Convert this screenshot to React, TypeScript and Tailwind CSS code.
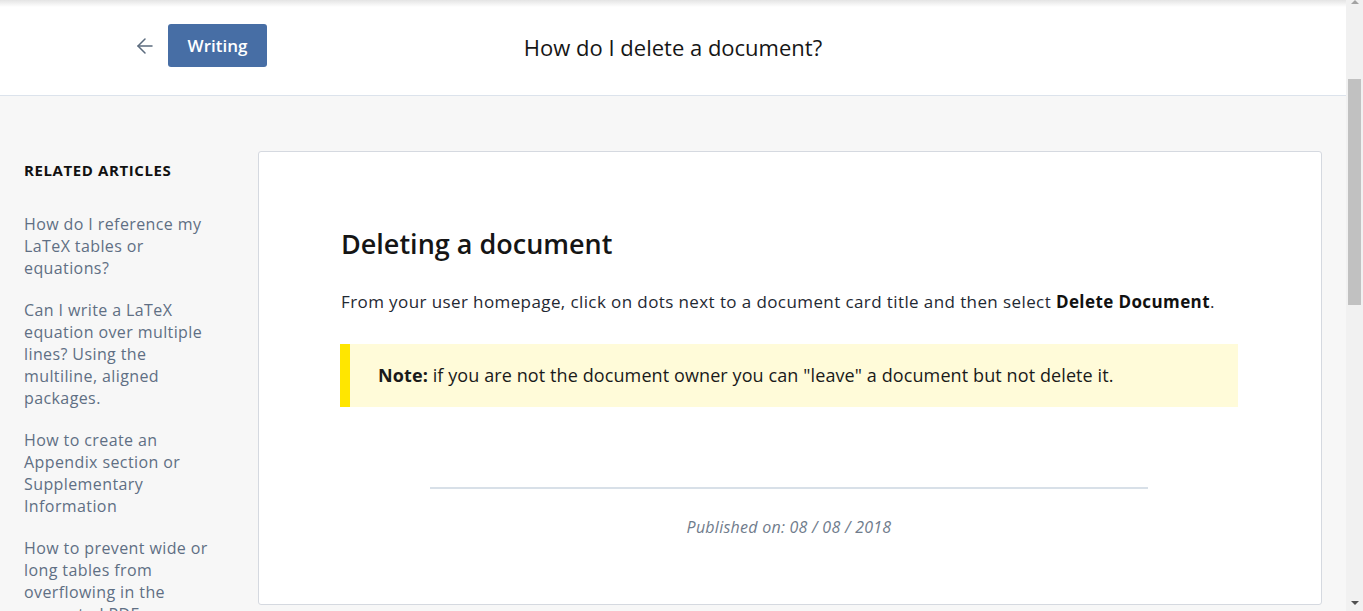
import { ArrowLeft } from "lucide-react";

const related = [
  "How do I reference my LaTeX tables or equations?",
  "Can I write a LaTeX equation over multiple lines? Using the multiline, aligned packages.",
  "How to create an Appendix section or Supplementary Information",
  "How to prevent wide or long tables from overflowing in the generated PDF",
];

function FakeScrollbar() {
  return (
    <div className="flex h-[611px] w-[17px] shrink-0 flex-col items-center bg-[#f1f1f1]">
      <div className="flex h-[17px] w-full items-start justify-center">
        <div className="h-0 w-0 border-x-[4px] border-b-[4px] border-x-transparent border-b-[#a3a3a3]" />
      </div>
      <div className="mt-[62px] h-[226px] w-[13px] bg-[#c1c1c1]" />
      <div className="flex-1" />
      <div className="flex h-[17px] w-full items-center justify-center">
        <div className="h-0 w-0 border-x-[4px] border-t-[4px] border-x-transparent border-t-[#505050]" />
      </div>
    </div>
  );
}

export default function App() {
  return (
    <div className="flex h-[611px] w-[1363px] overflow-hidden bg-[#f7f7f7] font-['Open_Sans',sans-serif]">
      <div className="flex min-w-0 flex-1 flex-col">
        {/* header */}
        <header className="relative flex h-[96px] shrink-0 items-center border-b border-[#dce3ec] bg-[linear-gradient(to_bottom,#e4e4e4,#ffffff_7px)] pb-[4px]">
          <div className="flex items-center pl-[133px]">
            <ArrowLeft className="h-6 w-6 text-[#5b6b7e]" strokeWidth={1.5} />
            <button
              type="button"
              className="ml-[11px] h-[43px] w-[99px] rounded-[3px] bg-[#476ea5] text-[17px] font-semibold text-white"
            >
              Writing
            </button>
          </div>
          <h1 className="absolute left-1/2 top-[47px] -translate-x-1/2 -translate-y-1/2 whitespace-nowrap text-[22px] font-normal text-[#161616]">
            How do I delete a document?
          </h1>
        </header>

        <div className="flex flex-1 items-start pt-[55px] pr-[24px]">
          {/* sidebar */}
          <aside className="w-[258px] shrink-0 pl-[24px] pr-[44px] pt-[9px]">
            <h2 className="text-[15px] font-bold uppercase leading-[20px] tracking-[0.6px] text-[#111]">
              Related Articles
            </h2>
            <ul className="mt-[33px] flex flex-col gap-[20px]">
              {related.map((r) => (
                <li key={r} className="text-[16px] leading-[22px] tracking-[0.4px] text-[#5f6f84]">
                  {r}
                </li>
              ))}
            </ul>
          </aside>

          {/* article card */}
          <article className="flex-1 rounded-[3px] border border-[#d5d9e0] bg-white pb-[66px] pl-[81px] pr-[83px] pt-[76px]">
            <h2 className="pl-px text-[27px] font-semibold leading-[32px] text-[#151515]">Deleting a document</h2>
            <p className="mt-[29px] pl-px text-[17px] leading-[26px] tracking-[0.4px] text-[#1f2933]">
              From your user homepage, click on dots next to a document card title and then select{" "}
              <b className="font-bold text-[#111]">Delete Document</b>.
            </p>
            <div className="mt-[29px] flex h-[63px] items-center border-l-[10px] border-[#ffe600] bg-[#fffbd9] pl-[28px] text-[18px] tracking-[0.1px] text-[#1a1a1a]">
              <p>
                <b className="font-bold">Note:</b> if you are not the document owner you can "leave" a document but not
                delete it.
              </p>
            </div>
            <div className="mx-auto mt-[80px] h-[2px] w-[718px] bg-[#d8e0e8]" />
            <p className="mt-[27px] text-center text-[16px] italic leading-[22px] tracking-[0.25px] text-[#707c8c]">
              Published on: 08 / 08 / 2018
            </p>
          </article>
        </div>
      </div>
      <FakeScrollbar />
    </div>
  );
}
